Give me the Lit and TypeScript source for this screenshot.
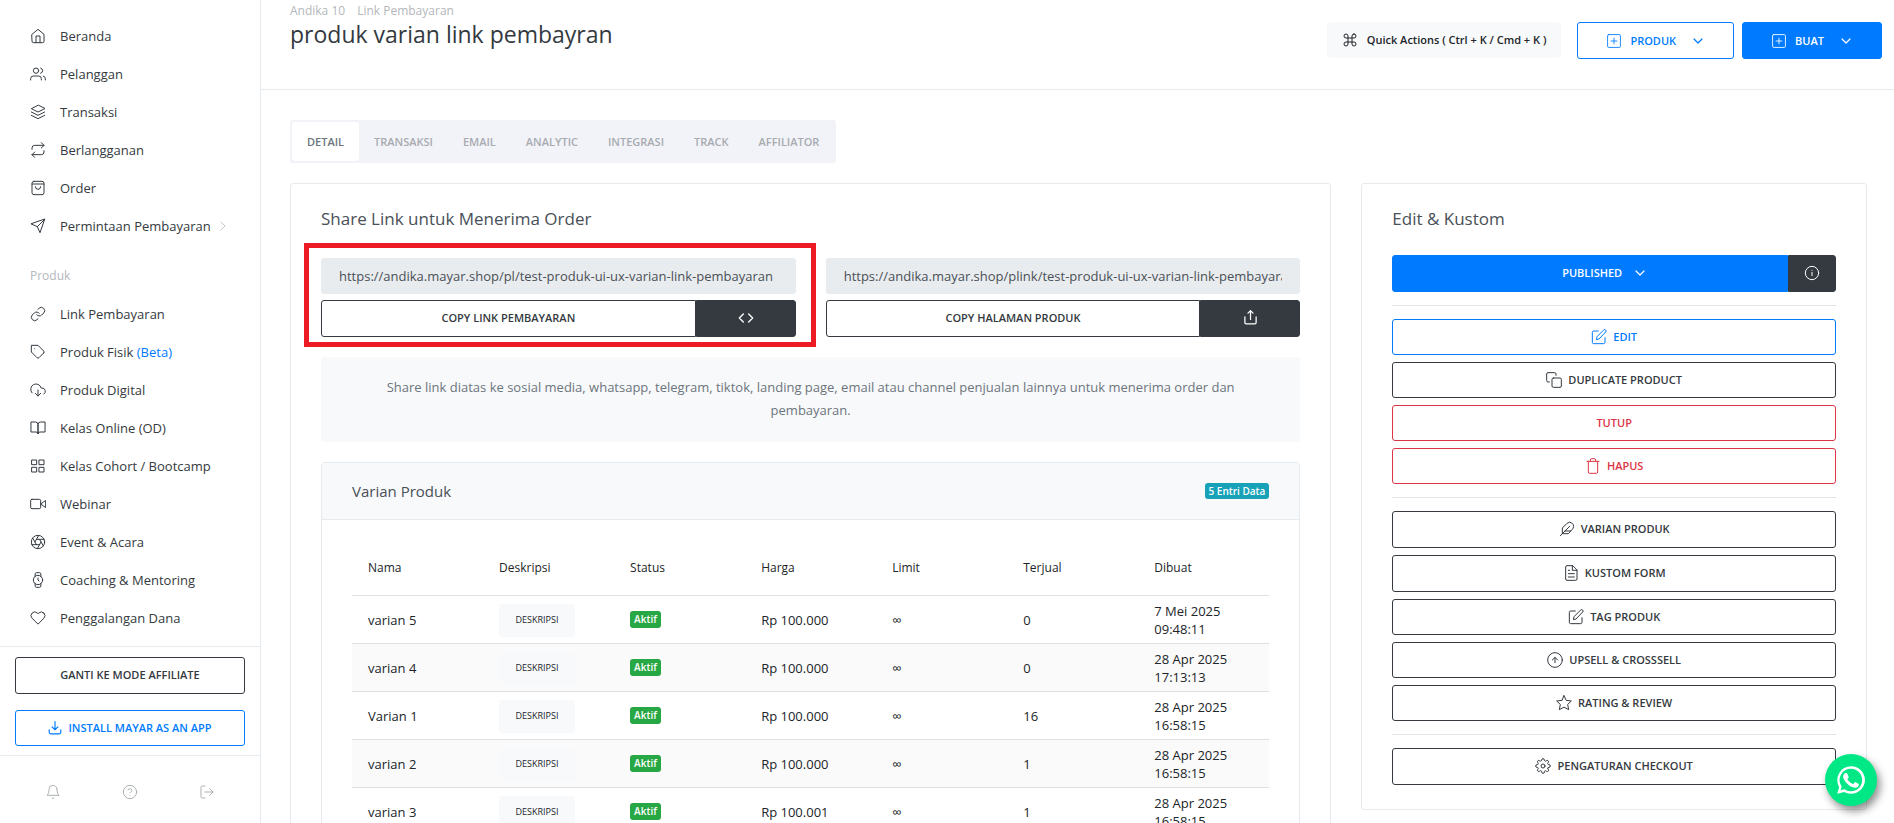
import { LitElement, html, css, svg, nothing } from "lit";
import { customElement, property } from "lit/decorators.js";

const ICONS: Record<string, unknown> = {
  home: svg`<path d="M3 9.500 12 2l9 7.500V20a2 2 0 0 1-2 2H5a2 2 0 0 1-2-2z"/><path d="M9 22V12h6v10"/>`,
  users: svg`<path d="M17 21v-2a4 4 0 0 0-4-4H5a4 4 0 0 0-4 4v2"/><circle cx="9" cy="7" r="4"/><path d="M23 21v-2a4 4 0 0 0-3-3.87M16 3.13a4 4 0 0 1 0 7.75"/>`,
  layers: svg`<path d="M12 2 2 7l10 5 10-5zM2 17l10 5 10-5M2 12l10 5 10-5"/>`,
  repeat: svg`<path d="m17 1 4 4-4 4"/><path d="M3 11V9a4 4 0 0 1 4-4h14M7 23l-4-4 4-4"/><path d="M21 13v2a4 4 0 0 1-4 4H3"/>`,
  bag: svg`<path d="M6 2h12a3 3 0 0 1 3 3v14a3 3 0 0 1-3 3H6a3 3 0 0 1-3-3V5a3 3 0 0 1 3-3zM3 6h18M16 10a4 4 0 0 1-8 0"/>`,
  send: svg`<path d="M22 2 11 13M22 2l-7 20-4-9-9-4z"/>`,
  link: svg`<path d="M10 13a5 5 0 0 0 7.54.54l3-3a5 5 0 0 0-7.07-7.07l-1.72 1.71"/><path d="M14 11a5 5 0 0 0-7.54-.54l-3 3a5 5 0 0 0 7.07 7.07l1.71-1.71"/>`,
  tag: svg`<path d="M20.59 13.41l-7.17 7.17a2 2 0 0 1-2.83 0L2 12V2h10l8.59 8.59a2 2 0 0 1 0 2.82zM7 7h.01"/>`,
  cloud: svg`<path d="m8 17 4 4 4-4M12 12v9"/><path d="M20.88 18.09A5 5 0 0 0 18 9h-1.26A8 8 0 1 0 3 16.29"/>`,
  book: svg`<path d="M2 3h6a4 4 0 0 1 4 4v14a3 3 0 0 0-3-3H2zM22 3h-6a4 4 0 0 0-4 4v14a3 3 0 0 1 3-3h7z"/>`,
  grid: svg`<path d="M3 3h7v7H3zM14 3h7v7h-7zM14 14h7v7h-7zM3 14h7v7H3z"/>`,
  video: svg`<path d="m23 7-7 5 7 5z"/><rect x="1" y="5" width="15" height="14" rx="2"/>`,
  aperture: svg`<circle cx="12" cy="12" r="10"/><path d="m14.31 8 5.74 9.94M9.69 8h11.48M7.38 12l5.74-9.94M9.69 16 3.95 6.06M14.31 16H2.83M16.62 12l-5.74 9.94"/>`,
  watch: svg`<circle cx="12" cy="12" r="7"/><path d="M12 9v3l1.5 1.5M16.51 17.35l-.35 3.83a2 2 0 0 1-2 1.82H9.83a2 2 0 0 1-2-1.82l-.35-3.83m.01-10.7.35-3.83A2 2 0 0 1 9.83 1h4.35a2 2 0 0 1 2 1.82l.35 3.83"/>`,
  heart: svg`<path d="M20.84 4.61a5.5 5.5 0 0 0-7.78 0L12 5.67l-1.06-1.06a5.5 5.5 0 0 0-7.78 7.78l1.06 1.06L12 21.23l7.78-7.78 1.06-1.06a5.5 5.5 0 0 0 0-7.78z"/>`,
  bell: svg`<path d="M18 8A6 6 0 0 0 6 8c0 7-3 9-3 9h18s-3-2-3-9M13.73 21a2 2 0 0 1-3.46 0"/>`,
  help: svg`<circle cx="12" cy="12" r="10"/><path d="M9.09 9a3 3 0 0 1 5.83 1c0 2-3 3-3 3M12 17h.01"/>`,
  logout: svg`<path d="M9 21H5a2 2 0 0 1-2-2V5a2 2 0 0 1 2-2h4M16 17l5-5-5-5M21 12H9"/>`,
  command: svg`<path d="M18 3a3 3 0 0 0-3 3v12a3 3 0 1 0 3-3H6a3 3 0 1 0 3 3V6a3 3 0 1 0-3 3h12a3 3 0 0 0 0-6z"/>`,
  plus: svg`<rect x="1" y="1" width="22" height="22" rx="2"/><path d="M12 7v10M7 12h10"/>`,
  down: svg`<path stroke-width="2.4" d="m4 8 8 8 8-8"/>`,
  right: svg`<path d="m8 4 8 8-8 8"/>`,
  info: svg`<circle cx="12" cy="12" r="10"/><path d="M12 16v-5M12 8h.01"/>`,
  edit: svg`<path d="M11 3H4a2 2 0 0 0-2 2v15a2 2 0 0 0 2 2h15a2 2 0 0 0 2-2v-7"/><path d="M19 1.500a2.100 2.100 0 0 1 3 3L12 15l-4 1 1-4z"/>`,
  copy: svg`<rect x="9" y="9" width="14" height="14" rx="2"/><path d="M5 15H3a2 2 0 0 1-2-2V3a2 2 0 0 1 2-2h10a2 2 0 0 1 2 2v2"/>`,
  trash: svg`<path d="M3 5h18M19 5v16a2 2 0 0 1-2 2H7a2 2 0 0 1-2-2V5m3 0V3a2 2 0 0 1 2-2h4a2 2 0 0 1 2 2v2"/>`,
  feather: svg`<path d="M20.240 12.240a6 6 0 0 0-8.490-8.490L5 10.500V19h8.500zM16 8 2 22M17.500 15H9"/>`,
  file: svg`<path d="M14 1H6a2 2 0 0 0-2 2v18a2 2 0 0 0 2 2h13a2 2 0 0 0 2-2V8zM14 1v7h7M17 13H8M17 18H8M10 8H8"/>`,
  upcircle: svg`<circle cx="12" cy="12" r="11"/><path d="m16 12-4-4-4 4M12 16V8"/>`,
  star: svg`<path d="m12 1 3.300 7L23 9l-5.500 5.200L19 22l-7-3.800L5 22l1.500-7.800L1 9l7.700-1z"/>`,
  gear: svg`<circle cx="12" cy="12" r="3"/><path d="M19.4 15a1.65 1.65 0 0 0 .33 1.82l.06.06a2 2 0 1 1-2.83 2.83l-.06-.06a1.65 1.65 0 0 0-2.8 1.17V21a2 2 0 0 1-4 0v-.09a1.65 1.65 0 0 0-2.9-1.26l-.06.06a2 2 0 1 1-2.83-2.83l.06-.06A1.65 1.65 0 0 0 3.09 14H3a2 2 0 0 1 0-4h.09a1.65 1.65 0 0 0 1.26-2.9l-.06-.06a2 2 0 1 1 2.83-2.83l.06.06A1.65 1.65 0 0 0 10 3.09V3a2 2 0 0 1 4 0v.09a1.65 1.65 0 0 0 2.82 1.17l.06-.06a2 2 0 1 1 2.83 2.83l-.06.06A1.65 1.65 0 0 0 20.91 10H21a2 2 0 0 1 0 4h-.09a1.65 1.65 0 0 0-1.51 1z"/>`,
  code: svg`<path stroke-width="2" d="m16 18 6-6-6-6M8 6l-6 6 6 6"/>`,
  share: svg`<path stroke-width="2" d="M3 11v9a2 2 0 0 0 2 2h14a2 2 0 0 0 2-2v-9M16 5l-4-4-4 4M12 1v14"/>`,
  download: svg`<path stroke-width="2" d="M2 15v4a3 3 0 0 0 3 3h14a3 3 0 0 0 3-3v-4M7 10l5 5 5-5M12 15V1"/>`,
};

@customElement("line-icon")
class LineIcon extends LitElement {
  @property() name = "";
  @property({ type: Number }) size = 16;
  static styles = css`
    :host { display: inline-flex; flex: none; }
    svg { fill: none; stroke: currentColor; stroke-width: 1.5; stroke-linecap: round; stroke-linejoin: round; }
  `;
  render() {
    return html`<svg width=${this.size} height=${this.size} viewBox="0 0 24 24" aria-hidden="true">${ICONS[this.name]}</svg>`;
  }
}

const MENU = [
  ["home", "Beranda"], ["users", "Pelanggan"], ["layers", "Transaksi"],
  ["repeat", "Berlangganan"], ["bag", "Order"], ["send", "Permintaan Pembayaran"],
];
const PRODUCTS = [
  ["link", "Link Pembayaran"], ["tag", "Produk Fisik"], ["cloud", "Produk Digital"],
  ["book", "Kelas Online (OD)"], ["grid", "Kelas Cohort / Bootcamp"], ["video", "Webinar"],
  ["aperture", "Event & Acara"], ["watch", "Coaching & Mentoring"], ["heart", "Penggalangan Dana"],
];
const TABS = ["DETAIL", "TRANSAKSI", "EMAIL", "ANALYTIC", "INTEGRASI", "TRACK", "AFFILIATOR"];
const COLUMNS = ["Nama", "Deskripsi", "Status", "Harga", "Limit", "Terjual", "Dibuat"];
const ROWS = [
  ["varian 5", "Rp 100.000", "0", "7 Mei 2025 09:48:11"],
  ["varian 4", "Rp 100.000", "0", "28 Apr 2025 17:13:13"],
  ["Varian 1", "Rp 100.000", "16", "28 Apr 2025 16:58:15"],
  ["varian 2", "Rp 100.000", "1", "28 Apr 2025 16:58:15"],
  ["varian 3", "Rp 100.001", "1", "28 Apr 2025 16:58:15"],
];
const ACTIONS = [
  [["edit", "EDIT", "blue"], ["copy", "DUPLICATE PRODUCT", ""], ["", "TUTUP", "red"], ["trash", "HAPUS", "red"]],
  [["feather", "VARIAN PRODUK", "tall"], ["file", "KUSTOM FORM", "tall"], ["edit", "TAG PRODUK", ""], ["upcircle", "UPSELL & CROSSSELL", ""], ["star", "RATING & REVIEW", ""]],
  [["gear", "PENGATURAN CHECKOUT", "tall"]],
];

@customElement("app-root")
class AppRoot extends LitElement {
  static styles = css`
    :host {
      display: flex; height: 100vh; overflow: hidden; background: #fff; color: #212529;
      font: 13px/18px "Open Sans", "Noto Sans", sans-serif;
    }
    * { box-sizing: border-box; }
    a { color: inherit; text-decoration: none; }
    button, input { font: inherit; color: inherit; margin: 0; }
    h1, h2, h3, p { margin: 0; font-weight: 400; }

    .sidebar { flex: none; width: 261px; border-right: 1px solid #e6ebef; display: flex; flex-direction: column; color: #343a40; }
    .menu { flex: 1; min-height: 0; overflow: hidden; padding: 17px 30px 0; }
    .item { display: flex; align-items: center; gap: 14px; height: 38px; white-space: nowrap; }
    .item .arrow { color: #adb5bd; margin-left: -8px; }
    .beta { color: #007bff; }
    .group { color: #b4b7bb; font-size: 12px; line-height: 18px; padding: 22px 0 10px; }
    .promo { border-top: 1px solid #e6ebef; border-bottom: 1px solid #e6ebef; padding: 10px 15px 9px; display: grid; gap: 16px; }
    .foot { display: flex; justify-content: space-around; align-items: center; height: 67px; padding: 4px 15px 0; }
    .ghost { background: none; border: 0; padding: 0; color: #adb0b3; display: flex; }

    .btn {
      display: flex; align-items: center; justify-content: center; gap: 6px; width: 100%; height: 36px; padding: 0;
      border: 1px solid #343a40; border-radius: 3px; background: #fff; color: #343a40;
      font-size: 11px; font-weight: 600; line-height: 16px; white-space: nowrap; cursor: pointer;
    }
    .btn.tall { height: 37px; padding-bottom: 2px; }
    .btn.blue { border-color: #007bff; color: #007bff; }
    .btn.red { border-color: #dc3545; color: #dc3545; }
    .btn.fill { background: #007bff; border-color: #007bff; color: #fff; }
    .btn.dark { background: #343a40; color: #fff; }

    .main { flex: 1; min-width: 0; overflow-y: auto; scrollbar-width: none; }
    .header { display: flex; justify-content: space-between; height: 90px; padding: 2px 12px 0 29px; border-bottom: 1px solid #e6ebef; }
    .crumbs { display: flex; gap: 12px; font-size: 12px; line-height: 18px; color: #b4b7bb; }
    h1 { font-size: 23px; line-height: 28px; color: #343a40; }
    h2 { font-size: 17px; line-height: 22px; color: #495057; }
    h3 { font-size: 15px; line-height: 22px; color: #495057; }
    .tools { display: flex; align-items: flex-start; gap: 8px; padding-top: 20px; }
    .tools .btn { width: auto; padding: 0 29px; gap: 9px; }
    .tools .caret { margin-left: 7px; }
    .tools .quick { padding: 0 14px; background: #f8f9fb; border-color: #f8f9fb; color: #212529; margin-right: 8px; }

    .content { padding: 30px 27px 30px 29px; }
    .tabs { display: inline-flex; padding: 2px; background: #f2f3f8; border-radius: 3px; margin-bottom: 20px; vertical-align: top; }
    .tab { height: 39px; padding: 0 15px; border: 0; border-radius: 3px; background: none; color: #a7abb0; font-size: 11px; font-weight: 600; line-height: 16px; }
    .tab.on { background: #fff; color: #6c757d; }
    .columns { display: grid; grid-template-columns: calc((100% + 30px) * 2 / 3 - 30px) minmax(0, 1fr); gap: 30px; align-items: start; }
    .card { border: 1px solid #e6ebef; border-radius: 3px; padding: 24px 30px; }
    .shares { display: grid; grid-template-columns: 1fr 1fr; gap: 30px; margin-top: 28px; }
    .share { position: relative; display: grid; gap: 6px; min-width: 0; }
    .mark { position: absolute; inset: -15px -20px -10px -17px; border: 5px solid #ed1c24; pointer-events: none; }
    .url { width: 100%; height: 36px; border: 0; border-radius: 3px; background: #e9ecef; color: #495057; padding: 0 18px; }
    .split { display: flex; }
    .split .btn:first-child { flex: 1; border-radius: 3px 0 0 3px; }
    .split .btn:last-child { width: 100px; border-radius: 0 3px 3px 0; }
    .split .btn.small:last-child { width: 48px; }
    .note { margin: 20px 0; padding: 19px 60px 20px; background: #f8f9fb; border-radius: 3px; text-align: center; line-height: 23px; color: #6c757d; }
    .panel { border: 1px solid #e6ebef; border-radius: 3px; }
    .phead { display: flex; justify-content: space-between; align-items: center; height: 57px; padding: 0 30px; background: #f8f9fb; border-bottom: 1px solid #e6ebef; }
    .badge { display: inline-block; padding: 0 4px; border-radius: 3px; background: #17a2b8; color: #fff; font-size: 10px; font-weight: 600; line-height: 16px; }
    .badge.ok { background: #28a745; line-height: 17px; vertical-align: top; }
    .pbody { padding: 21px 30px; }
    table { width: 100%; table-layout: fixed; border-collapse: separate; border-spacing: 0; }
    th { height: 55px; padding: 0 16px; text-align: left; font-size: 12px; font-weight: 400; border-bottom: 1px solid #dee2e6; }
    td { height: 48px; padding: 6px 16px 5px; border-bottom: 1px solid #dee2e6; }
    tr:nth-child(even) td { background: #fafafa; }
    .desc { display: block; width: 76px; height: 33px; padding: 0; border: 0; border-radius: 3px; background: #f8f9fb; font-size: 9px; font-weight: 500; }

    .published { margin-top: 25px; }
    .published .btn.fill { gap: 12px; padding-left: 28px; }
    .acts { display: grid; gap: 7px; margin-top: 13px; padding-top: 13px; border-top: 1px solid #e2e5e8; }
    .chat {
      position: fixed; right: 17px; bottom: 17px; width: 52px; height: 52px; border: 0; border-radius: 50%; padding: 0;
      background: #00e785; display: flex; align-items: center; justify-content: center; box-shadow: 3px 5px 8px rgba(0, 0, 0, 0.45);
    }
  `;

  private item([icon, label]: string[]) {
    return html`<a class="item" href="#"><line-icon name=${icon}></line-icon><span>${label}${label === "Produk Fisik" ? html` <span class="beta">(Beta)</span>` : nothing}</span>${icon === "send" ? html`<line-icon class="arrow" name="right" size="12"></line-icon>` : nothing}</a>`;
  }

  render() {
    return html`
      <aside class="sidebar">
        <nav class="menu">
          ${MENU.map((m) => this.item(m))}
          <div class="group">Produk</div>
          ${PRODUCTS.map((m) => this.item(m))}
        </nav>
        <div class="promo">
          <button class="btn tall">GANTI KE MODE AFFILIATE</button>
          <button class="btn blue"><line-icon name="download" size="14"></line-icon>INSTALL MAYAR AS AN APP</button>
        </div>
        <div class="foot">
          <button class="ghost" aria-label="Notifikasi"><line-icon name="bell"></line-icon></button>
          <button class="ghost" aria-label="Bantuan"><line-icon name="help"></line-icon></button>
          <button class="ghost" aria-label="Keluar"><line-icon name="logout"></line-icon></button>
        </div>
      </aside>
      <main class="main">
        <header class="header">
          <div>
            <nav class="crumbs"><a href="#">Andika 10</a><a href="#">Link Pembayaran</a></nav>
            <h1>produk varian link pembayran</h1>
          </div>
          <div class="tools">
            <button class="btn quick"><line-icon name="command"></line-icon>Quick Actions ( Ctrl + K / Cmd + K )</button>
            <button class="btn blue tall"><line-icon name="plus" size="14"></line-icon>PRODUK<line-icon class="caret" name="down" size="12"></line-icon></button>
            <button class="btn fill tall"><line-icon name="plus" size="14"></line-icon>BUAT<line-icon class="caret" name="down" size="12"></line-icon></button>
          </div>
        </header>
        <div class="content">
          <nav class="tabs">${TABS.map((t, i) => html`<button class="tab ${i ? "" : "on"}">${t}</button>`)}</nav>
          <div class="columns">
            <section class="card">
              <h2>Share Link untuk Menerima Order</h2>
              <div class="shares">
                <div class="share">
                  <input class="url" readonly aria-label="Link pembayaran" .value=${"https://andika.mayar.shop/pl/test-produk-ui-ux-varian-link-pembayaran"} />
                  <div class="split">
                    <button class="btn tall">COPY LINK PEMBAYARAN</button>
                    <button class="btn tall dark" aria-label="Embed"><line-icon name="code"></line-icon></button>
                  </div>
                  <div class="mark"></div>
                </div>
                <div class="share">
                  <input class="url" readonly aria-label="Halaman produk" .value=${"https://andika.mayar.shop/plink/test-produk-ui-ux-varian-link-pembayaran"} />
                  <div class="split">
                    <button class="btn tall">COPY HALAMAN PRODUK</button>
                    <button class="btn tall dark" aria-label="Bagikan"><line-icon name="share" size="15"></line-icon></button>
                  </div>
                </div>
              </div>
              <p class="note">Share link diatas ke sosial media, whatsapp, telegram, tiktok, landing page, email atau channel penjualan lainnya untuk menerima order dan pembayaran.</p>
              <div class="panel">
                <div class="phead"><h3>Varian Produk</h3><span class="badge">5 Entri Data</span></div>
                <div class="pbody">
                  <table>
                    <thead><tr>${COLUMNS.map((c) => html`<th scope="col">${c}</th>`)}</tr></thead>
                    <tbody>
                      ${ROWS.map(([name, price, sold, date]) => html`<tr>
                        <td>${name}</td>
                        <td><button class="desc">DESKRIPSI</button></td>
                        <td><span class="badge ok">Aktif</span></td>
                        <td>${price}</td>
                        <td>∞</td>
                        <td>${sold}</td>
                        <td>${date}</td>
                      </tr>`)}
                    </tbody>
                  </table>
                </div>
              </div>
            </section>
            <aside class="card">
              <h2>Edit &amp; Kustom</h2>
              <div class="split published">
                <button class="btn tall fill">PUBLISHED<line-icon name="down" size="12"></line-icon></button>
                <button class="btn tall dark small" aria-label="Info"><line-icon name="info"></line-icon></button>
              </div>
              ${ACTIONS.map((g) => html`<div class="acts">${g.map(([icon, label, kind]) => html`<button class="btn ${kind}">${icon ? html`<line-icon name=${icon}></line-icon>` : nothing}${label}</button>`)}</div>`)}
            </aside>
          </div>
        </div>
      </main>
      <button class="chat" aria-label="WhatsApp">
        <svg width="30" height="30" viewBox="0 0 24 24" fill="#fff" aria-hidden="true"><path d="M12 1a11 11 0 0 0-9.5 16.5L1 23l5.6-1.5A11 11 0 1 0 12 1zm0 2a9 9 0 1 1-4.900 16.600l-.4-.2-3 .8.8-3-.2-.4A9 9 0 0 1 12 3z"/><path d="M9 6.900c-.2-.5-.4-.5-.7-.5h-.6c-.2 0-.6.1-.9.4-.3.3-1.100 1.100-1.100 2.600s1.100 3 1.300 3.200c.2.2 2.200 3.400 5.300 4.700 2.600 1 3.100.8 3.700.8.600-.1 1.800-.7 2-1.500.300-.7.300-1.300.200-1.500-.1-.1-.3-.2-.6-.4l-2-1c-.3-.1-.5-.1-.7.2l-.9 1.100c-.2.2-.3.2-.6.1-.3-.2-1.300-.5-2.500-1.500-.9-.8-1.500-1.800-1.700-2.100-.2-.3 0-.5.1-.6l.5-.5.3-.5c.1-.2 0-.4 0-.5z"/></svg>
      </button>
    `;
  }
}
